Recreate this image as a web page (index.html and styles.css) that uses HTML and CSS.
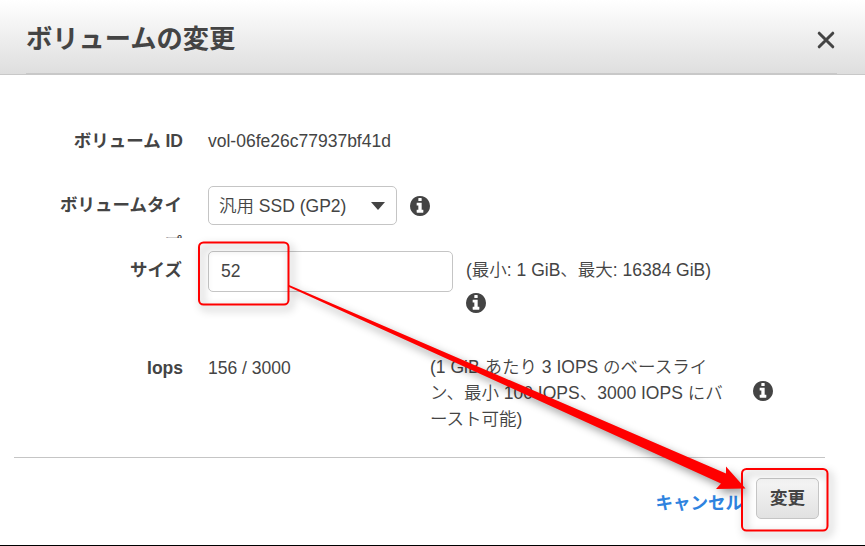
FILE: index.html
```html
<!DOCTYPE html>
<html lang="ja">
<head>
<meta charset="utf-8">
<title>ボリュームの変更</title>
<link rel="stylesheet" href="styles.css">
</head>
<body>
<svg class="defs" width="0" height="0">
  <symbol id="info" viewBox="0 0 1536 1536"><path d="M1024 1248v-160q0-14-9-23t-23-9h-96V544q0-14-9-23t-23-9H544q-14 0-23 9t-9 23v160q0 14 9 23t23 9h96v320h-96q-14 0-23 9t-9 23v160q0 14 9 23t23 9h448q14 0 23-9t9-23zm-128-896V192q0-14-9-23t-23-9H672q-14 0-23 9t-9 23v160q0 14 9 23t23 9h192q14 0 23-9t9-23zm640 416q0 209-103 385.500T1153.500 1433 768 1536t-385.500-103T103 1153.500 0 768t103-385.500T382.500 103 768 0t385.500 103T1433 382.500 1536 768z"/></symbol>
</svg>
<div class="dialog">
  <header class="header">
    <div class="header-inner">
      <h1 class="title">ボリュームの変更</h1>
      <svg class="close" viewBox="0 0 18 18"><path d="M2.200 2.200 15.800 15.800M15.800 2.200 2.200 15.800"/></svg>
    </div>
  </header>
  <main class="body">
    <div class="row row-id">
      <div class="label">ボリューム ID</div>
      <div class="value">vol-06fe26c77937bf41d</div>
    </div>
    <div class="row row-type">
      <div class="label label-clip">ボリュームタイプ</div>
      <div class="select"><span>汎用 SSD (GP2)</span><i class="caret"></i></div>
      <svg class="info"><use href="#info"/></svg>
    </div>
    <div class="row row-size">
      <div class="label">サイズ</div>
      <div class="input">52</div>
      <div class="hint"><span>(最小: 1 GiB、最大: 16384 GiB)</span><svg class="info"><use href="#info"/></svg></div>
    </div>
    <div class="row row-iops">
      <div class="label">Iops</div>
      <div class="value iops">156 / 3000</div>
      <div class="note">(1 GiB あたり 3 IOPS のベースライ<br>ン、最小 100 IOPS、3000 IOPS にバ<br>ースト可能)</div>
      <svg class="info info-iops"><use href="#info"/></svg>
    </div>
  </main>
  <footer class="footer">
    <span class="cancel">キャンセル</span>
    <span class="button">変更</span>
  </footer>
</div>
<svg class="annotation" viewBox="0 0 865 546">
  <g class="marks">
    <rect x="199" y="242.500" width="89.500" height="62" rx="4.500"/>
    <rect x="742" y="469" width="85.500" height="61.500" rx="4.500"/>
    <path d="M289 285 726 473.500V466.500L745.500 488.500 716 489 721 483.500 289 287Z"/>
  </g>
</svg>
</body>
</html>
```

FILE: styles.css
```css
* { box-sizing: border-box; }
body {
  margin: 0;
  background: #fff;
  color: #444;
  font: 350 17.500px/26px "Liberation Sans", "Noto Sans CJK JP", sans-serif;
  overflow: hidden;
}
.defs { display: block; }
.dialog {
  display: flex;
  flex-direction: column;
  height: 546px;
  border-bottom: 1px solid #000;
}
.header {
  height: 75px;
  padding: 0 28px 0 26px;
  background: linear-gradient(#fff, #dedede);
  border-bottom: 1px solid #c8c8c8;
}
.header-inner {
  display: flex;
  justify-content: space-between;
  align-items: center;
  height: 74px;
  border-bottom: 1px solid #c8c8c8;
}
.title {
  margin: 4px 0 0;
  font-size: 26.250px;
  line-height: 36px;
  font-weight: 700;
}
.close {
  width: 18px;
  height: 18px;
  margin: 6px 2.500px 0 0;
  fill: none;
  stroke: #444;
  stroke-width: 3;
  stroke-linecap: round;
}
.body { height: 382px; padding-top: 53px; }
.row { display: flex; align-items: flex-start; white-space: nowrap; }
.label {
  width: 183px;
  margin-right: 25px;
  text-align: right;
  font-weight: 700;
}
.row-id { height: 58px; }
.row-type { height: 65px; }
.row-type .label { padding-right: 1px; }
.row-size .label { padding-right: 1px; }
.label-clip {
  height: 52px;
  padding-left: 57px;
  line-height: 39px;
  overflow: hidden;
  white-space: normal;
  word-break: break-all;
}
.select {
  display: flex;
  align-items: center;
  justify-content: space-between;
  width: 189px;
  height: 39px;
  padding: 0 11px 0 10px;
  border: 1px solid #c5c5c5;
  border-radius: 5px;
}
.caret {
  border: 7px solid transparent;
  border-top: 8px solid #444;
  border-bottom: 0;
  margin-top: 1px;
}
.info {
  display: block;
  width: 20px;
  height: 20px;
  fill: #444;
}
.row-type .info { margin: 10px 0 0 13px; }
.row-size { height: 103px; }
.row-size .label { padding-top: 6px; }
.input {
  width: 245px;
  height: 41px;
  padding: 6px 12px;
  border: 1px solid #c5c5c5;
  border-radius: 5px;
}
.hint { padding: 6px 0 0 13px; }
.hint .info { margin-top: 10px; }
.row-iops .label, .iops { padding-top: 1px; }
.iops { width: 222px; }
.note { width: 323px; }
.info-iops { margin-top: 27px; }
.footer {
  display: flex;
  flex: 1;
  justify-content: flex-end;
  align-items: flex-start;
  margin: 0 40px 0 14px;
  padding: 20px 6px 0 0;
  border-top: 1px solid #c5c5c5;
}
.cancel {
  margin: 12px 13px 0 0;
  color: #2e83df;
  font-weight: 700;
}
.button {
  width: 63px;
  height: 41px;
  line-height: 39px;
  text-align: center;
  font-weight: 700;
  border: 1px solid #c5c5c5;
  border-radius: 5px;
  background: linear-gradient(#f5f5f5, #e2e2e2);
}
.annotation {
  position: absolute;
  left: 0;
  top: 0;
  width: 865px;
  height: 546px;
  pointer-events: none;
}
.marks { filter: drop-shadow(3px 4px 4px rgba(0, 0, 0, .4)); }
.marks rect { fill: none; stroke: #f00; stroke-width: 2; }
.marks path { fill: #f00; }
```
